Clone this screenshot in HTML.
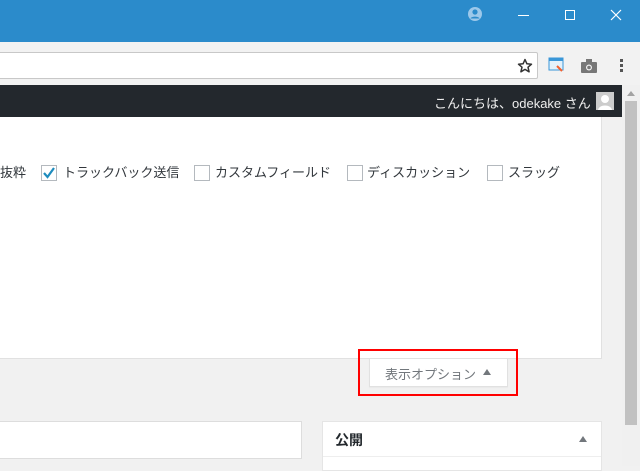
<!DOCTYPE html>
<html><head><meta charset="utf-8"><style>
*{margin:0;padding:0;box-sizing:border-box}
body{width:640px;height:466px;overflow:hidden;position:relative;background:#f1f1f1;font-family:"Liberation Sans","Noto Sans CJK JP",sans-serif;}
.abs{position:absolute}
.cb{position:absolute;top:165px;width:16px;height:16px;border:1px solid #b4b9be;background:#fff}
.lbl{position:absolute;top:164px;font-size:13px;line-height:18px;color:#32373c;white-space:nowrap}
</style></head><body>
<div class="abs" style="left:0;top:0;width:640px;height:42px;background:#2b8bcb"></div>
<svg class="abs" style="left:467px;top:6px" width="16" height="16" viewBox="0 0 16 16"><circle cx="8" cy="8" r="7" fill="#9cc8ea"/><circle cx="8" cy="6" r="2.6" fill="#2b8bcb"/><path d="M3.5 12.5c1-2.5 8-2.5 9 0" fill="#2b8bcb"/></svg>
<div class="abs" style="left:518px;top:15px;width:11px;height:1px;background:#fff"></div>
<div class="abs" style="left:565px;top:10px;width:10px;height:10px;border:1px solid #fff"></div>
<svg class="abs" style="left:610px;top:9px" width="12" height="12"><path d="M1 1L11 11M11 1L1 11" stroke="#fff" stroke-width="1.2"/></svg>
<div class="abs" style="left:0;top:42px;width:640px;height:43px;background:#f2f2f2"></div>
<div class="abs" style="left:-4px;top:52px;width:542px;height:27px;background:#fff;border:1px solid #c8c8c8;border-radius:2px"></div>
<svg class="abs" style="left:517px;top:58px" width="16" height="16" viewBox="0 0 16 16"><path d="M8 1.5l1.9 4.3 4.6.4-3.5 3 1.1 4.6L8 11.4l-4.1 2.4 1.1-4.6-3.5-3 4.6-.4z" fill="none" stroke="#333" stroke-width="1.5" stroke-linejoin="round"/></svg>
<svg class="abs" style="left:548px;top:57px" width="18" height="18"><rect x="1" y="1" width="14" height="12" fill="#e3f1fb" stroke="#3a97d8"/><rect x="1" y="1" width="14" height="3" fill="#3a97d8"/><path d="M9 9l5 5" stroke="#f06030" stroke-width="2"/></svg>
<svg class="abs" style="left:581px;top:59px" width="16" height="14"><rect x="0" y="3" width="16" height="11" rx="1" fill="#777"/><rect x="5" y="0" width="6" height="4" fill="#777"/><circle cx="8" cy="8.5" r="3" fill="#f2f2f2"/><circle cx="8" cy="8.5" r="1.8" fill="#777"/></svg>
<div class="abs" style="left:620px;top:59px;width:3px;height:3px;background:#555;box-shadow:0 5px #555,0 10px #555"></div>
<div class="abs" style="left:0;top:85px;width:622px;height:32px;background:#23282d"></div>
<div class="abs" style="left:434px;top:93px;font-size:13px;color:#eee;white-space:nowrap">こんにちは、odekake さん</div>
<div class="abs" style="left:596px;top:92px;width:18px;height:18px;background:#ccc"><svg width="18" height="18"><circle cx="9" cy="7" r="4" fill="#fff"/><path d="M2 18c1-6 13-6 14 0z" fill="#fff"/></svg></div>
<div class="abs" style="left:622px;top:85px;width:18px;height:381px;background:#f0f0f0"></div>
<div class="abs" style="left:625px;top:101px;width:12px;height:324px;background:#c1c1c1"></div>
<div class="abs" style="left:627px;top:91px;width:0;height:0;border-left:4px solid transparent;border-right:4px solid transparent;border-bottom:5px solid #a3a3a3"></div>
<div class="abs" style="left:0;top:117px;width:602px;height:242px;background:#fff;border-right:1px solid #e1e1e1;border-bottom:1px solid #e1e1e1"></div>
<div class="lbl" style="left:0">抜粋</div>
<div class="cb" style="left:41px"><svg width="14" height="14"><path d="M2 7l3.5 4L12 2" stroke="#1e8cbe" stroke-width="2.2" fill="none"/></svg></div>
<div class="lbl" style="left:63px">トラックバック送信</div>
<div class="cb" style="left:194px"></div><div class="lbl" style="left:215px">カスタムフィールド</div>
<div class="cb" style="left:347px"></div><div class="lbl" style="left:367px">ディスカッション</div>
<div class="cb" style="left:487px"></div><div class="lbl" style="left:508px">スラッグ</div>
<div class="abs" style="left:369px;top:359px;width:139px;height:28px;background:#fff;border:1px solid #e1e1e1;border-top:none;box-shadow:0 1px 1px rgba(0,0,0,.04)"></div>
<div class="abs" style="left:385px;top:364px;font-size:13px;color:#72777c;white-space:nowrap">表示オプション</div>
<div class="abs" style="left:483px;top:369px;width:0;height:0;border-left:4px solid transparent;border-right:4px solid transparent;border-bottom:6px solid #72777c"></div>
<div class="abs" style="left:358px;top:349px;width:160px;height:47px;border:2px solid #f00"></div>
<div class="abs" style="left:-2px;top:421px;width:304px;height:38px;background:#fff;border:1px solid #ddd"></div>
<div class="abs" style="left:322px;top:421px;width:280px;height:50px;background:#fff;border:1px solid #e5e5e5"></div>
<div class="abs" style="left:323px;top:456px;width:278px;height:1px;background:#eee"></div>
<div class="abs" style="left:335px;top:430px;font-size:14px;font-weight:bold;color:#23282d">公開</div>
<div class="abs" style="left:579px;top:436px;width:0;height:0;border-left:4px solid transparent;border-right:4px solid transparent;border-bottom:6px solid #72777c"></div>
</body></html>
